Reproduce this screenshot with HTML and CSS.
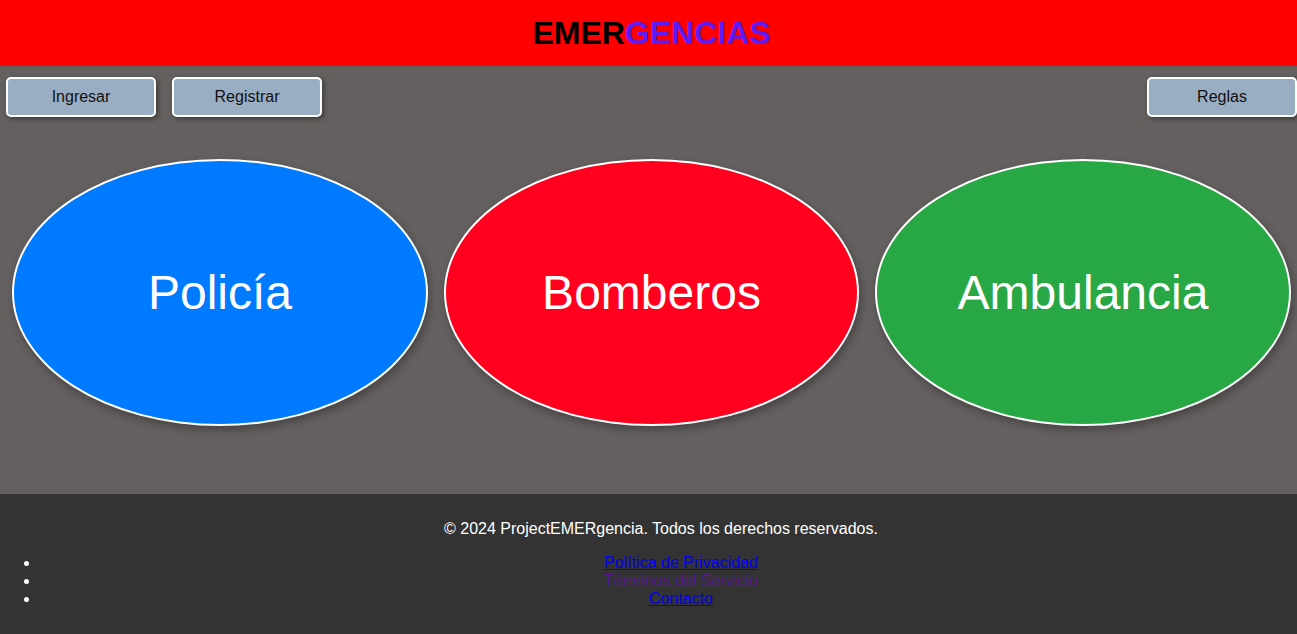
FILE: index.html
```html
<!DOCTYPE html>
<html lang="es">
<head>
<meta charset="utf-8">
<title>EMERGENCIAS</title>
<link rel="stylesheet" href="styles.css">
</head>
<body>
<header class="header">
  <h1 class="title"><span class="t-black">EMER</span><span class="t-purple">GENCIAS</span></h1>
</header>
<main class="main">
  <div class="toolbar">
    <div class="toolbar-left">
      <button class="btn">Ingresar</button>
      <button class="btn">Registrar</button>
    </div>
    <button class="btn">Reglas</button>
  </div>
  <div class="circles">
    <div class="circle c-blue">Policía</div>
    <div class="circle c-red">Bomberos</div>
    <div class="circle c-green">Ambulancia</div>
  </div>
</main>
<footer class="footer">
  <p class="copy">© 2024 ProjectEMERgencia. Todos los derechos reservados.</p>
  <ul class="links">
    <li><a href="#privacidad" class="link">Política de Privacidad</a></li>
    <li><a href="#terminos" class="link visited">Términos del Servicio</a></li>
    <li><a href="#contacto" class="link">Contacto</a></li>
  </ul>
</footer>
</body>
</html>
```
FILE: styles.css
```css
html, body {
  margin: 0;
  padding: 0;
}
body {
  font-family: "Liberation Sans", Arial, sans-serif;
  background: #656060;
  height: 634px;
  overflow: hidden;
}
.header {
  background: #ff0000;
  height: 66px;
  display: flex;
  align-items: center;
  justify-content: center;
  padding-left: 6px;
}
.title {
  margin: 0;
  font-size: 32px;
  font-weight: bold;
  line-height: 36px;
}
.t-black { color: #000; }
.t-purple { color: #5c1cf8; }
.main {
  height: 428px;
  background: #656060;
  box-sizing: border-box;
  padding-top: 11px;
}
.toolbar {
  display: flex;
  justify-content: space-between;
  padding-left: 6px;
}
.toolbar-left {
  display: flex;
  gap: 16px;
}
.btn {
  width: 150px;
  height: 40px;
  box-sizing: border-box;
  background: #9aaec3;
  border: 2px solid #fff;
  border-radius: 5px;
  box-shadow: 2px 2px 5px rgba(0, 0, 0, 0.4);
  font-family: "Liberation Sans", Arial, sans-serif;
  font-size: 16px;
  color: #111;
  padding: 0;
}
.circles {
  display: flex;
  gap: 16px;
  padding-left: 12px;
  margin-top: 42px;
}
.circle {
  width: 416px;
  height: 267px;
  box-sizing: border-box;
  border: 2px solid #fff;
  border-radius: 50%;
  display: flex;
  align-items: center;
  justify-content: center;
  color: #fff;
  font-size: 48px;
  box-shadow: 2px 4px 8px rgba(0, 0, 0, 0.3);
}
.c-blue { background: #007bff; }
.c-red { background: #ff001e; width: 415px; }
.c-green { background: #28a745; }
.footer {
  background: #333333;
  height: 140px;
  box-sizing: border-box;
  padding: 10px 0;
  text-align: center;
  color: #fff;
  font-size: 16px;
  line-height: 18px;
  overflow: hidden;
}
.copy {
  margin: 16px 0;
  padding-left: 25px;
}
.links {
  margin: 16px -25px 16px 0;
  padding-left: 40px;
}
.link {
  color: #0000ee;
}
.link.visited {
  color: #551a8b;
}
```
